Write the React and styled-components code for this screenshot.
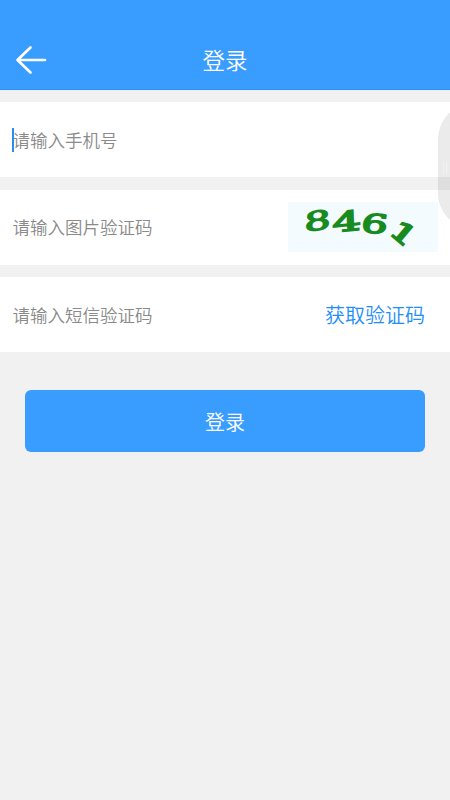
import React from "react";
import styled, { createGlobalStyle } from "styled-components";

const digits = [
  { value: "8", x: 29.4, y: 18.3, rotate: -8, skew: -8, sx: 1.62, size: 26, stroke: 1.3 },
  { value: "4", x: 58.8, y: 19, rotate: -6, skew: -4, sx: 1.68, size: 27, stroke: 1.6 },
  { value: "6", x: 86.8, y: 21.6, rotate: 4, skew: -6, sx: 1.6, size: 26, stroke: 1.6 },
  { value: "1", x: 115.8, y: 31.2, rotate: 40, skew: 0, sx: 1.4, size: 27, stroke: 2 },
];

const App = () => {
  return (
    <>
      <GlobalStyle />
      <Page>
        <Header>
          <BackButton aria-label="返回">
            <svg width="32" height="30" viewBox="0 0 32 30" fill="none">
              <path
                d="M15.5 2.5L2.5 15L15.5 27.5M2.5 15H30"
                stroke="white"
                strokeWidth="2.7"
                strokeLinecap="round"
                strokeLinejoin="round"
              />
            </svg>
          </BackButton>
          <Title>登录</Title>
        </Header>
        <Form>
          <Field>
            <Caret />
            <Placeholder>请输入手机号</Placeholder>
          </Field>
          <Field>
            <Placeholder>请输入图片验证码</Placeholder>
            <Captcha width="150" height="50" viewBox="0 0 150 50">
              {digits.map((d) => (
                <text
                  key={d.value}
                  fontSize={d.size}
                  strokeWidth={d.stroke}
                  textAnchor="middle"
                  transform={`translate(${d.x} ${d.y}) rotate(${d.rotate}) skewX(${d.skew}) scale(${d.sx} 1)`}
                  y={d.size * 0.365}
                >
                  {d.value}
                </text>
              ))}
            </Captcha>
          </Field>
          <Field>
            <Placeholder>请输入短信验证码</Placeholder>
            <SendCode>获取验证码</SendCode>
          </Field>
        </Form>
        <Submit>登录</Submit>
        <SideHandle width="12" height="112" viewBox="0 0 12 112">
          <path
            d="M12.5 1C7 6 .5 16 .5 28V85C.5 94 7 104 12.5 109Z"
            fill="#000"
            fillOpacity=".08"
            stroke="#000"
            strokeOpacity=".04"
          />
          <path d="M5.5 51V63M8.5 51V63" stroke="#fff" strokeOpacity=".35" />
        </SideHandle>
      </Page>
    </>
  );
};

const GlobalStyle = createGlobalStyle`
  * {
    box-sizing: border-box;
  }
  body {
    margin: 0;
    background: #f1f1f1;
    font-family: "Noto Sans CJK SC", sans-serif;
    font-weight: 350;
  }
  button {
    font-family: inherit;
    font-weight: inherit;
    border: none;
    padding: 0;
    background: none;
    cursor: pointer;
  }
`;

const Page = styled.div`
  position: relative;
  width: 450px;
  height: 800px;
  overflow: hidden;
  background: #f1f1f1;
`;

const Header = styled.header`
  display: grid;
  grid-template-columns: 62px 1fr 62px;
  align-items: center;
  height: 90px;
  padding-top: 30px;
  background: #399cff;
  border-bottom: 1px solid #2490f8;
`;

const BackButton = styled.button`
  display: flex;
  padding-left: 15px;
`;

const Title = styled.h1`
  margin: 0;
  padding-bottom: 2px;
  color: white;
  font-size: 22.5px;
  font-weight: inherit;
  line-height: 32px;
  text-align: center;
`;

const Form = styled.div`
  display: flex;
  flex-direction: column;
  gap: 12.5px;
  padding-top: 12.4px;
`;

const Field = styled.div`
  display: flex;
  align-items: center;
  height: 75px;
  padding: 0 12.5px;
  background: white;
`;

const Caret = styled.span`
  width: 2px;
  height: 24px;
  margin: 0 -1.5px 0 -0.5px;
  background: #2a8cf0;
`;

const Placeholder = styled.span`
  flex: 1;
  color: #8a8a8a;
  font-size: 17.5px;
  line-height: 26px;
`;

const Captcha = styled.svg`
  overflow: visible;
  background: #f3fbff;
  text {
    fill: #178a20;
    stroke: #178a20;
    font-family: "DejaVu Serif", serif;
    font-weight: 400;
  }
`;

const SendCode = styled.button`
  margin-right: 12.5px;
  color: #1f8dfa;
  font-size: 20px;
  line-height: 30px;
`;

const Submit = styled.button`
  display: block;
  width: 400px;
  height: 62.5px;
  margin: 37.5px auto 0;
  border-radius: 6px;
  background: #399cff;
  color: white;
  font-size: 20px;
`;

/* floats over the form at the right edge of the screen */
const SideHandle = styled.svg`
  position: absolute;
  top: 111px;
  right: 0;
`;

export default App;
